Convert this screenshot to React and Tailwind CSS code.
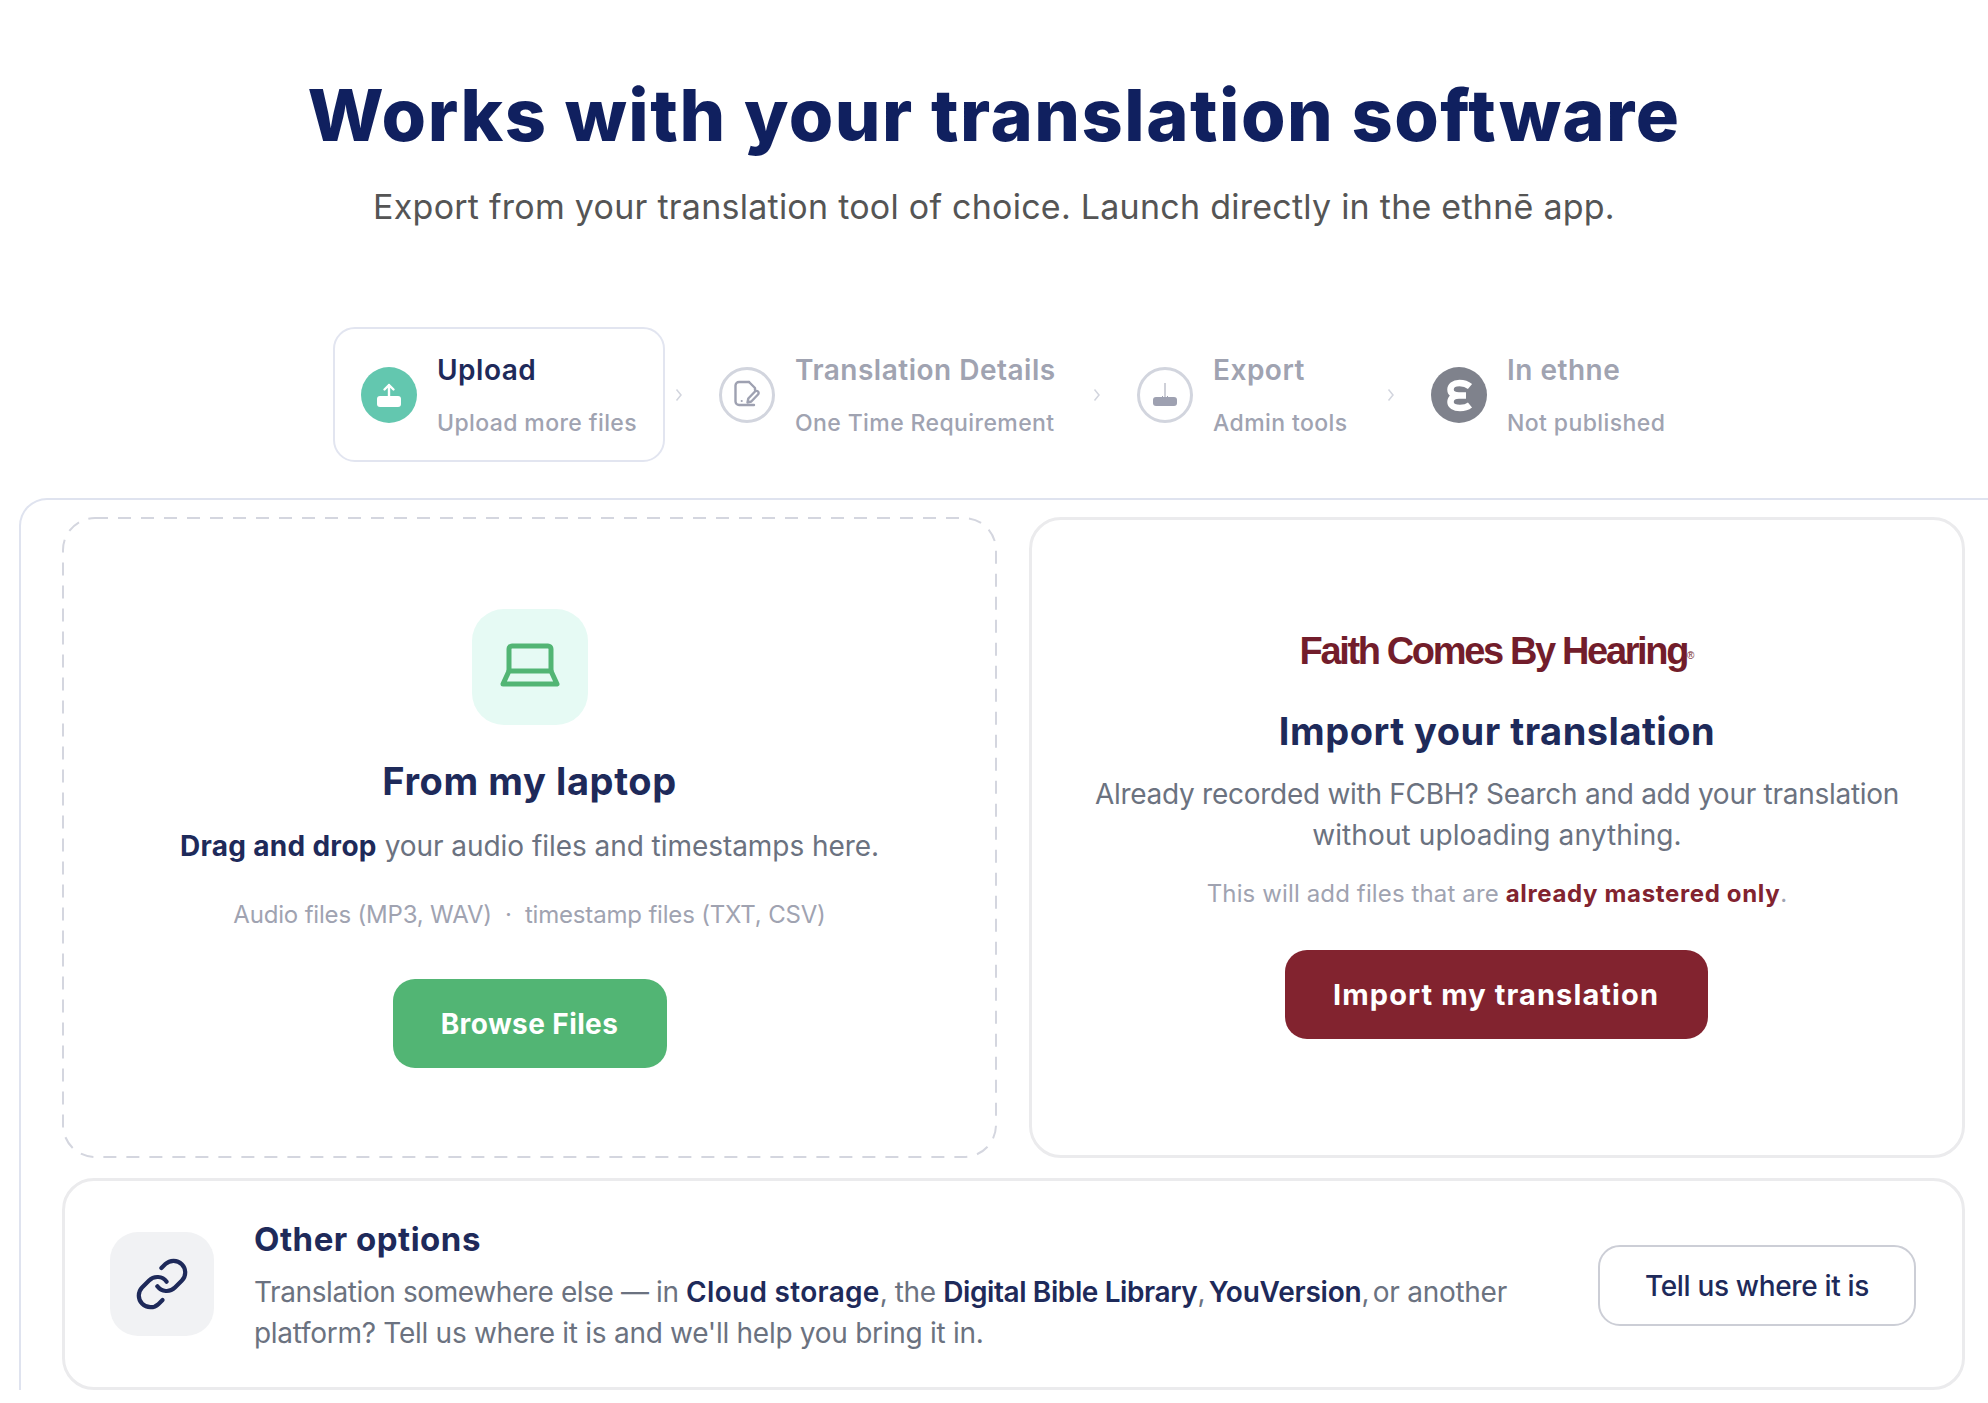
import { Link } from 'lucide-react';

const font = { fontFamily: 'Inter, "Liberation Sans", sans-serif' };

function UploadIcon() {
  return (
    <div className="flex h-[56px] w-[56px] shrink-0 items-center justify-center rounded-full bg-[#63c7af]">
      <svg width="56" height="56" viewBox="0 0 56 56" fill="none">
        <rect x="16" y="29" width="24" height="11" rx="3" fill="#fff" />
        <path d="M28 32V18M23.5 22.5 28 18l4.5 4.5" stroke="#fff" strokeWidth="2.4" strokeLinecap="round" strokeLinejoin="round" />
      </svg>
    </div>
  );
}

function DetailsIcon() {
  return (
    <div className="flex h-[56px] w-[56px] shrink-0 items-center justify-center rounded-full border-[3px] border-[#d2d5de]">
      <svg width="50" height="50" viewBox="0 0 50 50" fill="none" stroke="#9ea1b1" strokeWidth="2.4" strokeLinecap="round" strokeLinejoin="round">
        <path d="M27 12H17a3.500 3.500 0 0 0-3.500 3.500v16A3.500 3.500 0 0 0 17 35h15" />
        <path d="M27 12l6 6v2" />
        <path d="M25.500 32.500l.8-4 6.700-7a2.100 2.100 0 0 1 3 3l-6.700 7z" />
        <circle cx="19.700" cy="31" r="1.100" fill="#9ea1b1" stroke="none" />
      </svg>
    </div>
  );
}

function ExportIcon() {
  return (
    <div className="flex h-[56px] w-[56px] shrink-0 items-center justify-center rounded-full border-[3px] border-[#d2d5de]">
      <svg width="50" height="50" viewBox="0 0 50 50" fill="none">
        <rect x="13" y="27" width="24" height="9" rx="3" fill="#9ea1b1" />
        <path d="M25 13v16M22 26l3 3 3-3" stroke="#9ea1b1" strokeWidth="1" />
      </svg>
    </div>
  );
}

function EthneIcon() {
  return (
    <div className="flex h-[56px] w-[56px] shrink-0 items-center justify-center rounded-full bg-[#7f828c]">
      <svg width="56" height="56" viewBox="0 0 56 56" fill="none">
        <path
          d="M39 19.500C36 17 32.500 16 28.500 16 22.500 16 19.500 19 19.500 22.500c0 4 3.500 6 8.500 6h7M28 28.500c-5 0-8.500 2.500-8.500 6.500 0 3.500 3.500 6 9.500 6 4 0 7.500-1 10-3"
          stroke="#fff"
          strokeWidth="6.500"
        />
      </svg>
    </div>
  );
}

function Step({ width, icon, title, sub, active }) {
  return (
    <div
      className={`flex h-[135px] shrink-0 items-center gap-[20px] rounded-[22px] border-2 ${active ? 'border-[#e2e5f0] pl-[26px]' : 'border-transparent pl-[25px]'} ${width}`}
    >
      {icon}
      <div>
        <div className={`text-[28px] font-semibold leading-[40px] tracking-[0.5px] ${active ? 'text-[#1e2a5a]' : 'text-[#a0a3b1]'}`}>{title}</div>
        <div className="mt-[17px] text-[23px] font-medium leading-[32px] tracking-[0.4px] text-[#a0a3b1]">{sub}</div>
      </div>
    </div>
  );
}

function Chevron() {
  return (
    <div className="flex w-[27px] shrink-0 items-center justify-center">
      <svg width="8" height="14" viewBox="0 0 8 14" fill="none">
        <path d="M1.500 1.500 6 7l-4.500 5.500" stroke="#d2d5de" strokeWidth="1.500" />
      </svg>
    </div>
  );
}

export default function App() {
  return (
    <div className="h-screen w-full overflow-hidden bg-white" style={font}>
      <div className="pt-[71px] text-center">
        <h1 className="text-[72px] font-extrabold leading-[88px] tracking-[1.5px] text-[#10205f]">Works with your translation software</h1>
        <p className="mt-[24px] text-[34px] leading-[48px] tracking-[0.25px] text-[#555555]">
          Export from your translation tool of choice. Launch directly in the ethnē app.
        </p>
      </div>

      <div className="mt-[96px] ml-[333px] flex">
        <Step active width="w-[332px]" icon={<UploadIcon />} title="Upload" sub="Upload more files" />
        <Chevron />
        <Step width="w-[391px]" icon={<DetailsIcon />} title="Translation Details" sub="One Time Requirement" />
        <Chevron />
        <Step width="w-[267px]" icon={<ExportIcon />} title="Export" sub="Admin tools" />
        <Chevron />
        <Step width="w-[289px]" icon={<EthneIcon />} title="In ethne" sub="Not published" />
      </div>

      <div className="mt-[36px] ml-[19px] w-[2040px] rounded-tl-[28px] border-t-2 border-l-2 border-[#dfe3ef] pt-[17px] pl-[41px]">
        <div className="flex gap-[32px]">
          <div className="relative flex h-[641px] w-[935px] flex-col items-center pt-[92px] text-center">
            <svg className="absolute inset-0 h-full w-full" fill="none">
              <rect x="1" y="1" width="933" height="639" rx="32" stroke="#d4d6df" strokeWidth="2" strokeDasharray="13 10" />
            </svg>
            <div className="flex h-[116px] w-[116px] items-center justify-center rounded-[32px] bg-[#e6faf4]">
              <svg width="64" height="64" viewBox="0 0 64 64" fill="none" stroke="#52b574" strokeWidth="5" strokeLinejoin="round">
                <path d="M11 36V14a3 3 0 0 1 3-3h36a3 3 0 0 1 3 3v22" />
                <path d="M11 36h42l6 13H5z" />
              </svg>
            </div>
            <h2 className="mt-[32px] text-[38px] font-bold leading-[48px] tracking-[0.6px] text-[#1e2a5a]">From my laptop</h2>
            <p className="mt-[21px] text-[28px] leading-[40px] tracking-[-0.05px] text-[#6b7280]">
              <strong className="font-bold tracking-[0.3px] text-[#1e2a5a]">Drag and drop</strong> your audio files and timestamps here.
            </p>
            <p className="mt-[33px] text-[24px] leading-[32px] tracking-[-0.18px] text-[#a0a3b1]">Audio files (MP3, WAV) &nbsp;·&nbsp; timestamp files (TXT, CSV)</p>
            <button className="mt-[48px] h-[89px] w-[274px] rounded-[22px] bg-[#52b574] text-[28px] font-bold tracking-[0.4px] text-white">Browse Files</button>
          </div>

          <div className="flex h-[641px] w-[936px] flex-col items-center rounded-[32px] border-[3px] border-[#ebebed] pt-[107px] text-center">
            <div className="text-[38px] font-bold leading-[48px] tracking-[-2.35px] text-[#721d2b]" style={{ fontFamily: '"Liberation Sans", sans-serif' }}>
              Faith Comes By Hearing<sup className="text-[10px] font-normal leading-none tracking-normal">®</sup>
            </div>
            <h2 className="mt-[32px] text-[38px] font-bold leading-[48px] tracking-[0.5px] text-[#1e2a5a]">Import your translation</h2>
            <p className="mt-[19px] w-[860px] text-[28px] leading-[41px] text-[#6b7280]">
              <span className="tracking-[-0.27px]">Already recorded with FCBH? Search and add your translation</span>
              <br />
              <span className="tracking-[0.1px]">without uploading anything.</span>
            </p>
            <p className="mt-[22px] text-[24px] leading-[32px] tracking-[0.13px] text-[#a0a3b1]">
              This will add files that are <strong className="font-bold tracking-[0.65px] text-[#82232f]">already mastered only</strong>.
            </p>
            <button className="mt-[40px] mr-[2px] h-[89px] w-[423px] rounded-[22px] bg-[#82232f] text-[29px] font-bold tracking-[1.1px] text-white">Import my translation</button>
          </div>
        </div>

        <div className="mt-[20px] flex h-[212px] w-[1903px] items-center rounded-[32px] border-[3px] border-[#ebebed] pl-[45px]">
          <div className="flex h-[104px] w-[104px] shrink-0 items-center justify-center rounded-[28px] bg-[#f1f2f4]">
            <Link className="h-[56px] w-[56px] text-[#1e2a5a]" strokeWidth={1.8} />
          </div>
          <div className="ml-[40px] w-[1290px] pt-[5px]">
            <h3 className="text-[33px] font-bold leading-[40px] tracking-[0.5px] text-[#1e2a5a]">Other options</h3>
            <p className="mt-[13px] text-[28px] leading-[41px] tracking-[-0.4px] text-[#6b7280]">
              Translation somewhere else — in <strong className="font-semibold tracking-[0.3px] text-[#1e2a5a]">Cloud storage</strong>, the{' '}
              <strong className="font-semibold tracking-[-0.4px] text-[#1e2a5a]">Digital Bible Library</strong>
              <span className="tracking-[-2.3px]">, </span>
              <strong className="font-semibold tracking-[-0.2px] text-[#1e2a5a]">YouVersion</strong>
              <span className="tracking-[-2.3px]">, </span>
              <span className="tracking-[-0.28px]">or another platform? Tell us where it is and we'll help you bring it in.</span>
            </p>
          </div>
          <button className="ml-auto mr-[46px] mt-[3px] h-[81px] w-[318px] rounded-[22px] border-2 border-[#ccced6] text-[28px] font-medium tracking-[-0.33px] text-[#1e2a5a]">Tell us where it is</button>
        </div>
      </div>
    </div>
  );
}
